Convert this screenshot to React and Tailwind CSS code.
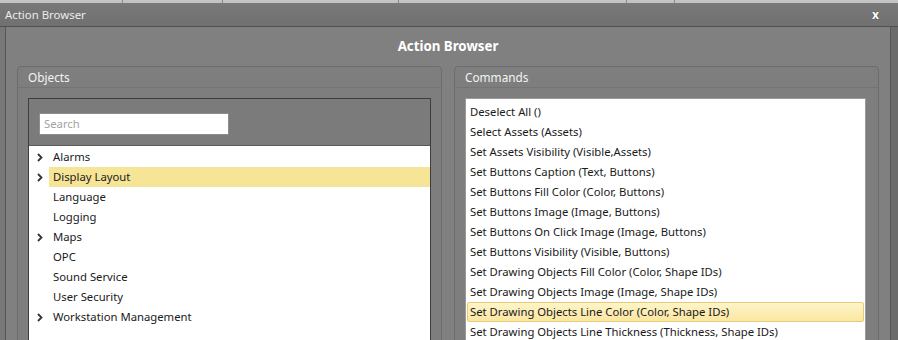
import React from "react";

const objects = [
  { name: "Alarms", expandable: true },
  { name: "Display Layout", expandable: true, selected: true },
  { name: "Language" },
  { name: "Logging" },
  { name: "Maps", expandable: true },
  { name: "OPC" },
  { name: "Sound Service" },
  { name: "User Security" },
  { name: "Workstation Management", expandable: true },
];

const commands = [
  "Deselect All ()",
  "Select Assets (Assets)",
  "Set Assets Visibility (Visible,Assets)",
  "Set Buttons Caption (Text, Buttons)",
  "Set Buttons Fill Color (Color, Buttons)",
  "Set Buttons Image (Image, Buttons)",
  "Set Buttons On Click Image (Image, Buttons)",
  "Set Buttons Visibility (Visible, Buttons)",
  "Set Drawing Objects Fill Color (Color, Shape IDs)",
  "Set Drawing Objects Image (Image, Shape IDs)",
  "Set Drawing Objects Line Color (Color, Shape IDs)",
  "Set Drawing Objects Line Thickness (Thickness, Shape IDs)",
];

function Chevron() {
  return (
    <svg width="6" height="9" viewBox="0 0 6 9">
      <path d="M1 1 L4.5 4.5 L1 8" fill="none" stroke="#333" strokeWidth="1.8" />
    </svg>
  );
}

function Panel({ title, children }) {
  return (
    <div className="flex flex-col rounded-t-[4px] border border-[#6c6c6c] bg-[#7e7e7e]">
      <div className="h-[21px] shrink-0 border-b border-[#747474] pl-[10px] text-[11.8px] leading-[21px] text-[#f4f4f4]">
        {title}
      </div>
      <div className="px-[10px] pt-[10px]">{children}</div>
    </div>
  );
}

export default function App() {
  return (
    <div
      className="flex h-[340px] w-[898px] flex-col overflow-hidden bg-[#6e6e6e]"
      style={{ fontFamily: '"Noto Sans", "Open Sans", sans-serif' }}
    >
      <div className="flex h-[3px] shrink-0 bg-[#c4c4c4]">
        <div className="w-[123px] border-r border-[#8a8a8a]" />
        <div className="w-[100px] border-r border-[#8a8a8a]" />
        <div className="w-[176px] border-r border-[#8a8a8a]" />
        <div className="w-[228px] border-r border-[#8a8a8a]" />
        <div className="w-[48px] border-r border-[#8a8a8a]" />
      </div>
      <div className="flex h-[24px] shrink-0 items-center justify-between border-b border-[#505050] bg-gradient-to-b from-[#797979] to-[#707070] pl-[5px] pr-[19px] pt-[1px]">
        <span className="text-[11.4px] text-[#ececec]">Action Browser</span>
        <span className="text-[12px] font-bold leading-none text-white [text-shadow:0_0_1px_#333]">x</span>
      </div>
      <div className="flex min-h-0 flex-1">
        <div className="w-[5px] bg-[#777777]" />
        <div className="flex flex-1 flex-col border-x border-[#565656] bg-[#808080] px-[11px]">
          <div className="flex h-[39px] shrink-0 items-center justify-center pt-[1px] text-[13.3px] font-bold text-white">
            Action Browser
          </div>
          <div className="grid grid-cols-2 gap-[12px]">
            <Panel title="Objects">
              <div className="border border-[#3e3e3e]">
                <div className="h-[47px] border-b border-[#5a5a5a] bg-[#7b7b7b] pl-[10px] pt-[11px]">
                  <input
                    className="h-[22px] w-[190px] border border-[#8e8e8e] bg-white px-[4px] text-[11.3px] text-black outline-none placeholder:text-[#a3a3a3]"
                    placeholder="Search"
                  />
                </div>
                <div className="h-[200px] bg-white pt-[1px]">
                  {objects.map((o) => (
                    <div key={o.name} className="flex h-[20px] items-center">
                      <div className="flex w-[20px] justify-center pl-[1px]">
                        {o.expandable && <Chevron />}
                      </div>
                      <div
                        className={`flex h-[20px] flex-1 items-center pl-[4px] text-[11.3px] text-[#1a1a1a] ${
                          o.selected ? "bg-[#f7e597]" : ""
                        }`}
                      >
                        {o.name}
                      </div>
                    </div>
                  ))}
                </div>
              </div>
            </Panel>
            <Panel title="Commands">
              <div className="mr-[2px] h-[260px] border border-[#9a9a9a] bg-white px-[1px] pt-[3px]">
                {commands.map((c, i) => (
                  <div
                    key={c}
                    className={`flex h-[20px] items-center rounded-[2px] px-[2px] text-[11.3px] text-[#1a1a1a] ${
                      i === 10
                        ? "border border-[#e6cc7a] bg-gradient-to-b from-[#fdf4c8] to-[#fbe7a0]"
                        : "border border-transparent"
                    }`}
                  >
                    {c}
                  </div>
                ))}
              </div>
            </Panel>
          </div>
        </div>
        <div className="w-[7px] bg-[#6b6b6b]" />
      </div>
    </div>
  );
}
